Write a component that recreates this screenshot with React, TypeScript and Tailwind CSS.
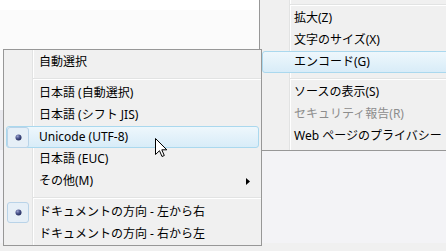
import React from 'react'

interface MenuEntry {
  label?: string
  separator?: boolean
  hover?: boolean
  checked?: boolean
  disabled?: boolean
  submenu?: boolean
}

// 左側のエンコードサブメニュー
const encodeItems: MenuEntry[] = [
  { label: '自動選択' },
  { separator: true },
  { label: '日本語 (自動選択)' },
  { label: '日本語 (シフト JIS)' },
  { label: 'Unicode (UTF-8)', hover: true, checked: true },
  { label: '日本語 (EUC)' },
  { label: 'その他(M)', submenu: true },
  { separator: true },
  { label: 'ドキュメントの方向 - 左から右', checked: true },
  { label: 'ドキュメントの方向 - 右から左' },
]

// 右側の表示メニュー
const viewItems: MenuEntry[] = [
  { label: '拡大(Z)' },
  { label: '文字のサイズ(X)' },
  { label: 'エンコード(G)', hover: true },
  { separator: true },
  { label: 'ソースの表示(S)' },
  { label: 'セキュリティ報告(R)', disabled: true },
  { label: 'Web ページのプライバシー' },
]

const Bullet = () => (
  <svg width="7" height="7" viewBox="0 0 7 7">
    <defs>
      <radialGradient id="dot" cx="0.35" cy="0.3" r="0.75">
        <stop offset="0" stopColor="#9aa3d0" />
        <stop offset="0.5" stopColor="#4a548c" />
        <stop offset="1" stopColor="#1f2858" />
      </radialGradient>
    </defs>
    <circle cx="3.5" cy="3.5" r="3" fill="url(#dot)" />
  </svg>
)

const SubArrow = () => (
  <svg width="4" height="7" viewBox="0 0 4 7" className="ml-auto mr-[8px]">
    <polygon points="0,0 4,3.5 0,7" fill="#000" />
  </svg>
)

const MenuRow: React.FC<{ item: MenuEntry; textPad: string }> = ({ item, textPad }) => (
  <div
    className={`h-[22px] mx-[2px] flex items-center rounded-[3px] border ${
      item.hover
        ? 'border-[#aad8ee] bg-linear-to-b from-[#eef7fc] to-[#d8ecf8]'
        : 'border-transparent'
    }`}
  >
    <div className="w-[22px] h-[20px] flex items-center justify-center shrink-0">
      {item.checked && (
        <div className="w-[22px] h-[21px] rounded-[3px] border border-[#b9d3e8] bg-[#e6eff7] flex items-center justify-center">
          <Bullet />
        </div>
      )}
    </div>
    <span
      className={`${textPad} text-[12px] leading-none whitespace-nowrap ${
        item.disabled ? 'text-[#8d8d8d]' : 'text-black'
      }`}
    >
      {item.label}
    </span>
    {item.submenu && <SubArrow />}
  </div>
)

const Separator: React.FC<{ h: string; pt: string; ml: string }> = ({ h, pt, ml }) => (
  <div className={`${h} ${pt}`}>
    <div className={`${ml} h-[2px] border-t border-[#e2e3e3] bg-white`} />
  </div>
)

const Cursor = () => (
  <svg
    width="13"
    height="20"
    viewBox="0 0 13 20"
    className="absolute left-[155px] top-[138px]"
  >
    <path
      d="M0.5 0.5 L0.5 16.5 L4.5 12.7 L7 18.5 L9.3 17.5 L6.8 11.8 L11.8 11.8 Z"
      fill="#fff"
      stroke="#000"
      strokeWidth="1"
      strokeLinejoin="miter"
    />
  </svg>
)

const App: React.FC = () => {
  return (
    <div className="relative w-[446px] h-[251px] overflow-hidden flex flex-col font-['Noto_Sans','Noto_Sans_CJK_JP',sans-serif]">
      {/* 背景 */}
      <div className="h-[10px] bg-white" />
      <div className="h-[100px] bg-[#fbfbfb]" />
      <div className="h-[40px] bg-[#fbfbfb] border-l-[3px] border-[#e9e9ee]" />
      <div className="flex-1 bg-[#f3f3f6]" />
      <div className="h-[8px] bg-[#f0f0f0]" />

      {/* 右側メニュー */}
      <div className="absolute left-[259px] top-0 w-[200px] border-l border-b border-[#979797] bg-[#f0f0f0] pb-[3px]">
        <div className="absolute left-[29px] top-0 bottom-0 w-[2px] border-l border-[#e2e3e3] bg-white" />
        <div className="relative">
          <Separator h="h-[7px]" pt="pt-[4px]" ml="ml-[30px]" />
          {viewItems.map((item, i) =>
            item.separator ? (
              <Separator key={i} h="h-[8px]" pt="pt-[5px]" ml="ml-[30px]" />
            ) : (
              <MenuRow key={i} item={item} textPad="ml-[9px]" />
            )
          )}
        </div>
      </div>

      {/* 左側メニュー (エンコード) */}
      <div className="absolute left-[3px] top-[49px] w-[259px] h-[197px] border border-[#979797] bg-[#f0f0f0] pt-[1px]">
        <div className="absolute left-[28px] top-0 bottom-0 w-[2px] border-l border-[#e2e3e3] bg-white" />
        <div className="relative">
          {encodeItems.map((item, i) =>
            item.separator ? (
              <Separator key={i} h="h-[9px]" pt="pt-[5px]" ml="ml-[29px]" />
            ) : (
              <MenuRow key={i} item={item} textPad="ml-[10px]" />
            )
          )}
        </div>
      </div>

      <Cursor />
    </div>
  )
}

export default App
